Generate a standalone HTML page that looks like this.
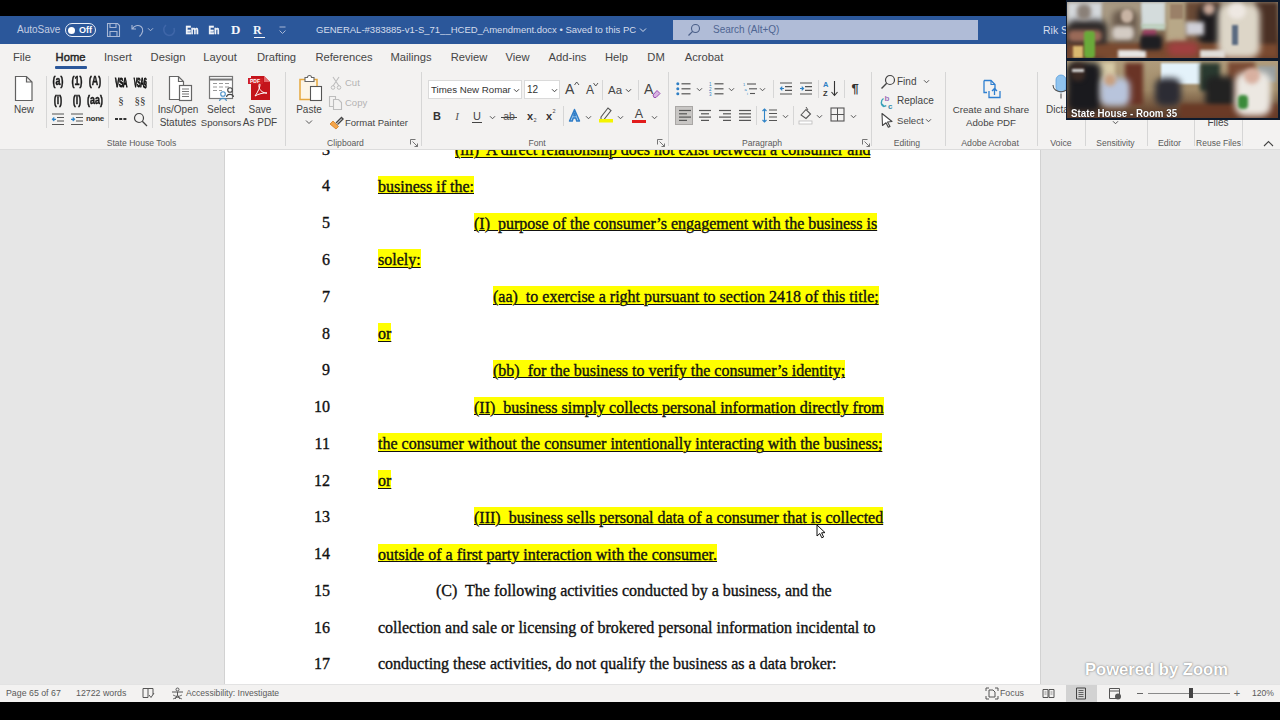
<!DOCTYPE html>
<html><head><meta charset="utf-8">
<style>
*{margin:0;padding:0;box-sizing:border-box}
html,body{width:1280px;height:720px;overflow:hidden;background:#000;font-family:"Liberation Sans",sans-serif;position:relative}
.a{position:absolute}
svg.a{overflow:visible}
.t{position:absolute;white-space:nowrap;color:#444;font-size:12px}
.ln{position:absolute;font-family:"Liberation Serif",serif;font-size:16px;color:#111;white-space:nowrap;line-height:20px;-webkit-text-stroke:0.35px #111}
.hl{background:#ffff00;text-decoration:underline;text-decoration-thickness:1px;text-underline-offset:1.5px;padding-top:1.5px}
</style></head><body>
<div class="a" style="left:0px;top:16px;width:1280px;height:28px;background:#2b579a"></div>
<div class="t" style="left:17px;top:20.0px;line-height:20px;font-size:10px;color:#c3cde2;font-weight:normal;">AutoSave</div>
<div class="a" style="left:65px;top:23px;width:31px;height:14px;border:1.2px solid #e8eef8;border-radius:7px"></div>
<div class="a" style="left:68px;top:26.5px;width:7px;height:7px;background:#fff;border-radius:50%"></div>
<div class="t" style="left:79px;top:20.0px;line-height:20px;font-size:9px;color:#fff;font-weight:bold;">Off</div>
<svg class="a" style="left:106px;top:22px;" width="15" height="16" viewBox="0 0 15 16"><path d="M1.5 1.5h10l2 2v11h-12z M4 1.5v4h6v-4 M4 14.5v-5h7v5" fill="none" stroke="#a9b8d6" stroke-width="1.1"/></svg>
<svg class="a" style="left:129px;top:22px;" width="16" height="16" viewBox="0 0 16 16"><path d="M3 3v4h4 M3.5 7 C5 3.5 9 2.5 12 4.5 C15 7 14 11 10.5 14.5" fill="none" stroke="#a9b8d6" stroke-width="1.1"/></svg>
<svg class="a" style="left:146.5px;top:26.5px;" width="7.0" height="5.0" viewBox="0 0 7.0 5.0"><path d="M1 1.25 L3.5 3.75 L6.0 1.25" fill="none" stroke="#a9b8d6" stroke-width="1"/></svg>
<svg class="a" style="left:161px;top:22px;" width="16" height="16" viewBox="0 0 16 16"><path d="M5 3 C1.5 6 2 12 8 13.5 C12 13.5 14.5 10 13 6" fill="none" stroke="#3f66a8" stroke-width="1.6"/></svg>
<div class="t" style="left:41.5px;width:300px;text-align:center;top:21.3px;line-height:20px;font-size:10px;color:#f4f6fa;font-weight:bold;transform:scaleX(0.85);-webkit-text-stroke:0.4px #f4f6fa">Em</div>
<div class="t" style="left:64px;width:300px;text-align:center;top:21.3px;line-height:20px;font-size:10px;color:#f4f6fa;font-weight:bold;transform:scaleX(0.85);-webkit-text-stroke:0.4px #f4f6fa">En</div>
<div class="t" style="left:231px;top:20.0px;line-height:20px;font-size:13px;color:#f4f6fa;font-weight:bold;font-family:'Liberation Serif',serif;">D</div>
<div class="t" style="left:253px;top:20.0px;line-height:20px;font-size:12px;color:#f4f6fa;font-weight:bold;font-family:'Liberation Serif',serif;">R</div>
<div class="a" style="left:254px;top:37px;width:11px;height:1px;background:#f4f6fa"></div>
<svg class="a" style="left:278px;top:24px;" width="9" height="12" viewBox="0 0 9 12"><path d="M1.5 3h6 M1.5 6.5 L4.5 9.5 L7.5 6.5" fill="none" stroke="#a9b8d6" stroke-width="1"/></svg>
<div class="t" style="left:316px;top:20.0px;line-height:20px;font-size:9.5px;color:#d5ddec;font-weight:normal;">GENERAL-#383885-v1-S_71__HCED_Amendment.docx • Saved to this PC</div>
<svg class="a" style="left:639px;top:27px;" width="8" height="6" viewBox="0 0 8 6"><path d="M1 1.5 L4 4.5 L7 1.5" fill="none" stroke="#d5ddec" stroke-width="1"/></svg>
<div class="a" style="left:673px;top:20px;width:305px;height:20px;background:#b0bcd7"></div>
<svg class="a" style="left:687px;top:23px;" width="14" height="14" viewBox="0 0 14 14"><circle cx="8.5" cy="5.5" r="4" fill="none" stroke="#4b5f88" stroke-width="1.1"/><path d="M5.6 8.4 L1.5 12.5" stroke="#4b5f88" stroke-width="1.2"/></svg>
<div class="t" style="left:713px;top:20.0px;line-height:20px;font-size:10px;color:#4f6592;font-weight:normal;">Search (Alt+Q)</div>
<div class="t" style="left:1043px;top:20.0px;line-height:20px;font-size:10.5px;color:#d5ddec;font-weight:normal;">Rik S</div>
<div class="a" style="left:0px;top:44px;width:1280px;height:106px;background:#f3f2f1"></div>
<div class="t" style="left:-128.0px;width:300px;text-align:center;top:47.0px;line-height:20px;font-size:11.2px;color:#464646;font-weight:normal;">File</div>
<div class="t" style="left:-79.5px;width:300px;text-align:center;top:47.0px;line-height:20px;font-size:11.2px;color:#252525;font-weight:normal;-webkit-text-stroke:0.45px #252525">Home</div>
<div class="t" style="left:-32.0px;width:300px;text-align:center;top:47.0px;line-height:20px;font-size:11.2px;color:#464646;font-weight:normal;">Insert</div>
<div class="t" style="left:18.0px;width:300px;text-align:center;top:47.0px;line-height:20px;font-size:11.2px;color:#464646;font-weight:normal;">Design</div>
<div class="t" style="left:70.0px;width:300px;text-align:center;top:47.0px;line-height:20px;font-size:11.2px;color:#464646;font-weight:normal;">Layout</div>
<div class="t" style="left:126.5px;width:300px;text-align:center;top:47.0px;line-height:20px;font-size:11.2px;color:#464646;font-weight:normal;">Drafting</div>
<div class="t" style="left:194.0px;width:300px;text-align:center;top:47.0px;line-height:20px;font-size:11.2px;color:#464646;font-weight:normal;">References</div>
<div class="t" style="left:261.0px;width:300px;text-align:center;top:47.0px;line-height:20px;font-size:11.2px;color:#464646;font-weight:normal;">Mailings</div>
<div class="t" style="left:319.0px;width:300px;text-align:center;top:47.0px;line-height:20px;font-size:11.2px;color:#464646;font-weight:normal;">Review</div>
<div class="t" style="left:367.5px;width:300px;text-align:center;top:47.0px;line-height:20px;font-size:11.2px;color:#464646;font-weight:normal;">View</div>
<div class="t" style="left:417.5px;width:300px;text-align:center;top:47.0px;line-height:20px;font-size:11.2px;color:#464646;font-weight:normal;">Add-ins</div>
<div class="t" style="left:466.5px;width:300px;text-align:center;top:47.0px;line-height:20px;font-size:11.2px;color:#464646;font-weight:normal;">Help</div>
<div class="t" style="left:506.0px;width:300px;text-align:center;top:47.0px;line-height:20px;font-size:11.2px;color:#464646;font-weight:normal;">DM</div>
<div class="t" style="left:554.0px;width:300px;text-align:center;top:47.0px;line-height:20px;font-size:11.2px;color:#464646;font-weight:normal;">Acrobat</div>
<div class="a" style="left:55px;top:66px;width:32px;height:2.5px;background:#2b579a;border-radius:1px"></div>
<svg class="a" style="left:14px;top:75px;" width="20" height="27" viewBox="0 0 20 27"><path d="M1.5 1.5h11l5.5 5.5v18.5h-16.5z M12.5 1.5v5.5h5.5" fill="#fff" stroke="#616161" stroke-width="1.2"/></svg>
<div class="t" style="left:-126px;width:300px;text-align:center;top:100.0px;line-height:20px;font-size:10px;color:#444;font-weight:normal;">New</div>
<div class="a" style="left:46px;top:76px;width:1px;height:52px;background:#d6d6d6"></div>
<div class="t" style="left:-92px;width:300px;text-align:center;top:70.8px;line-height:20px;font-size:13.5px;color:#1a1a1a;font-weight:bold;transform:scaleX(0.66);-webkit-text-stroke:0.5px #1a1a1a">(a)</div>
<div class="t" style="left:-73.5px;width:300px;text-align:center;top:70.8px;line-height:20px;font-size:13.5px;color:#1a1a1a;font-weight:bold;transform:scaleX(0.66);-webkit-text-stroke:0.5px #1a1a1a">(1)</div>
<div class="t" style="left:-55px;width:300px;text-align:center;top:70.8px;line-height:20px;font-size:13.5px;color:#1a1a1a;font-weight:bold;transform:scaleX(0.66);-webkit-text-stroke:0.5px #1a1a1a">(A)</div>
<div class="t" style="left:-92px;width:300px;text-align:center;top:90.0px;line-height:20px;font-size:13.5px;color:#1a1a1a;font-weight:bold;transform:scaleX(0.66);-webkit-text-stroke:0.5px #1a1a1a">(i)</div>
<div class="t" style="left:-73.5px;width:300px;text-align:center;top:90.0px;line-height:20px;font-size:13.5px;color:#1a1a1a;font-weight:bold;transform:scaleX(0.66);-webkit-text-stroke:0.5px #1a1a1a">(I)</div>
<div class="t" style="left:-55px;width:300px;text-align:center;top:90.0px;line-height:20px;font-size:13.5px;color:#1a1a1a;font-weight:bold;transform:scaleX(0.66);-webkit-text-stroke:0.5px #1a1a1a">(aa)</div>
<svg class="a" style="left:51px;top:113px;" width="14" height="13" viewBox="0 0 14 13"><path d="M1 1h12 M6 4.5h7 M6 8h7 M1 11.5h12" stroke="#555" stroke-width="1.2"/><path d="M5 6.3 H1.5 M3.3 4.5 L1.5 6.3 L3.3 8" fill="none" stroke="#2f83c7" stroke-width="1.2"/></svg>
<svg class="a" style="left:70px;top:113px;" width="14" height="13" viewBox="0 0 14 13"><path d="M1 1h12 M6 4.5h7 M6 8h7 M1 11.5h12" stroke="#555" stroke-width="1.2"/><path d="M1 6.3 H4.5 M2.7 4.5 L4.5 6.3 L2.7 8" fill="none" stroke="#2f83c7" stroke-width="1.2"/></svg>
<div class="t" style="left:-55px;width:300px;text-align:center;top:109.0px;line-height:20px;font-size:8px;color:#333;font-weight:bold;letter-spacing:-0.3px">none</div>
<div class="a" style="left:108px;top:76px;width:1px;height:52px;background:#d6d6d6"></div>
<div class="t" style="left:-29px;width:300px;text-align:center;top:72.5px;line-height:20px;font-size:13px;color:#111;font-weight:bold;transform:scaleX(0.5);letter-spacing:-1px;-webkit-text-stroke:0.9px #111">VSA</div>
<div class="t" style="left:-10px;width:300px;text-align:center;top:72.5px;line-height:20px;font-size:13px;color:#111;font-weight:bold;transform:scaleX(0.42);letter-spacing:-1px;-webkit-text-stroke:0.9px #111">VSA§</div>
<div class="t" style="left:-29px;width:300px;text-align:center;top:90.0px;line-height:20px;font-size:11px;color:#333;font-weight:normal;font-family:'Liberation Serif',serif;">§</div>
<div class="t" style="left:-10px;width:300px;text-align:center;top:90.0px;line-height:20px;font-size:11px;color:#333;font-weight:normal;font-family:'Liberation Serif',serif;">§§</div>
<svg class="a" style="left:114px;top:117px;" width="14" height="4" viewBox="0 0 14 4"><path d="M1 2h12" stroke="#333" stroke-width="2.2" stroke-dasharray="3 1.2"/></svg>
<svg class="a" style="left:133px;top:112px;" width="15" height="15" viewBox="0 0 15 15"><circle cx="6" cy="6" r="4.5" fill="none" stroke="#444" stroke-width="1.2"/><path d="M9.3 9.3 L14 14" stroke="#444" stroke-width="1.3"/></svg>
<div class="a" style="left:152px;top:76px;width:1px;height:52px;background:#d6d6d6"></div>
<svg class="a" style="left:168px;top:75px;" width="25" height="27" viewBox="0 0 25 27"><path d="M1.5 1.5h9l5 5v18h-14z M10.5 1.5v5h5" fill="#fff" stroke="#666" stroke-width="1.2"/><rect x="11.5" y="10.5" width="12" height="15" fill="#fff" stroke="#666" stroke-width="1.2"/><path d="M14 14h7 M14 16.5h7 M14 19h7 M14 21.5h7" stroke="#777" stroke-width="1"/></svg>
<div class="t" style="left:28px;width:300px;text-align:center;top:99.5px;line-height:20px;font-size:10px;color:#444;font-weight:normal;">Ins/Open</div>
<div class="t" style="left:28px;width:300px;text-align:center;top:113.0px;line-height:20px;font-size:10px;color:#444;font-weight:normal;">Statutes</div>
<svg class="a" style="left:208px;top:75px;" width="28" height="27" viewBox="0 0 28 27"><rect x="1.5" y="1.5" width="23" height="22" fill="#fff" stroke="#777" stroke-width="1.2"/><path d="M1.5 4.5h23" stroke="#777" stroke-width="2"/><path d="M5 8.5h4 M11 8.5h4 M17 8.5h4 M5 12h4 M11 12h4 M17 12h4 M5 15.5h4 M11 15.5h3" stroke="#999" stroke-width="1.1"/><circle cx="15" cy="19" r="2.3" fill="#fff" stroke="#4a90c8" stroke-width="1.1"/><path d="M11.5 26 C12 22.5 18 22.5 18.5 26" fill="none" stroke="#4a90c8" stroke-width="1.1"/><circle cx="22" cy="15" r="2.3" fill="#fff" stroke="#444" stroke-width="1.1"/><path d="M18.5 22 C19 18.5 25 18.5 25.5 22" fill="none" stroke="#444" stroke-width="1.1"/></svg>
<div class="t" style="left:71px;width:300px;text-align:center;top:99.5px;line-height:20px;font-size:10px;color:#444;font-weight:normal;">Select</div>
<div class="t" style="left:71px;width:300px;text-align:center;top:113.0px;line-height:20px;font-size:9.6px;color:#444;font-weight:normal;">Sponsors</div>
<svg class="a" style="left:247px;top:74px;" width="27" height="28" viewBox="0 0 27 28"><path d="M4 2h13l6 6v18h-19z" fill="#c4141b"/><path d="M17 2v6h6" fill="#e46a6e"/><rect x="1" y="4" width="15" height="6" fill="#d01f26"/><text x="3" y="9.2" font-size="5" font-weight="bold" fill="#fff" font-family="Liberation Sans">PDF</text><path d="M8 22 C11 18 13 13 13 11 C13 9 11.5 10 12 13 C13 17 16 19 20 19 C17 18.5 11 20 8 22z" fill="none" stroke="#fff" stroke-width="1"/></svg>
<div class="t" style="left:110px;width:300px;text-align:center;top:99.5px;line-height:20px;font-size:10px;color:#444;font-weight:normal;">Save</div>
<div class="t" style="left:110px;width:300px;text-align:center;top:113.0px;line-height:20px;font-size:10px;color:#444;font-weight:normal;">As PDF</div>
<div class="t" style="left:-8.5px;width:300px;text-align:center;top:133.0px;line-height:20px;font-size:8.6px;color:#5b5b5b;font-weight:normal;">State House Tools</div>
<div class="a" style="left:285px;top:72px;width:1px;height:74px;background:#d6d6d6"></div>
<svg class="a" style="left:297px;top:74px;" width="29" height="29" viewBox="0 0 29 29"><path d="M3 5.5h17v20h-17z" fill="#fcf5e6" stroke="#e6a83c" stroke-width="1.5"/><path d="M8 3.5h2.5a2 2 0 0 1 4 0h2.5v4h-9z" fill="#fff" stroke="#666" stroke-width="1.1"/><rect x="13.5" y="12.5" width="11" height="14" fill="#fff" stroke="#555" stroke-width="1.1"/></svg>
<div class="t" style="left:159px;width:300px;text-align:center;top:100.0px;line-height:20px;font-size:10px;color:#444;font-weight:normal;">Paste</div>
<svg class="a" style="left:305px;top:119px;" width="8" height="6" viewBox="0 0 8 6"><path d="M1 1.5 L4 4.5 L7 1.5" fill="none" stroke="#555" stroke-width="1"/></svg>
<svg class="a" style="left:330px;top:76px;" width="12" height="14" viewBox="0 0 12 14"><path d="M3 1 L9 10 M9 1 L3 10" stroke="#bdbdbd" stroke-width="1.1"/><circle cx="3" cy="11.5" r="1.8" fill="none" stroke="#bdbdbd"/><circle cx="9" cy="11.5" r="1.8" fill="none" stroke="#bdbdbd"/></svg>
<div class="t" style="left:345px;top:73.0px;line-height:20px;font-size:9.5px;color:#b3b3b3;font-weight:normal;">Cut</div>
<svg class="a" style="left:328px;top:95px;" width="15" height="15" viewBox="0 0 15 15"><path d="M1.5 1.5h6v10h-6z" fill="none" stroke="#bdbdbd" stroke-width="1.1"/><path d="M5.5 4.5h5l3 3v7h-8z" fill="#f3f2f1" stroke="#bdbdbd" stroke-width="1.1"/></svg>
<div class="t" style="left:345px;top:93.0px;line-height:20px;font-size:9.5px;color:#b3b3b3;font-weight:normal;">Copy</div>
<svg class="a" style="left:328px;top:115px;" width="16" height="15" viewBox="0 0 16 15"><path d="M2 9 L8 14 L10.5 11.5 L5 6z" fill="#f4a54a" stroke="#d27d1f" stroke-width="0.8"/><path d="M8 8 L13.5 2.5 L15 4 L9.5 9.5" fill="none" stroke="#444" stroke-width="1.4"/></svg>
<div class="t" style="left:345px;top:113.0px;line-height:20px;font-size:9.5px;color:#444;font-weight:normal;">Format Painter</div>
<div class="t" style="left:195.5px;width:300px;text-align:center;top:133.0px;line-height:20px;font-size:8.6px;color:#5b5b5b;font-weight:normal;">Clipboard</div>
<svg class="a" style="left:410px;top:139px;" width="9" height="8" viewBox="0 0 9 8"><path d="M0.5 0.5h5 M0.5 0.5v5 M2.5 2.5 L7.5 7.5 M4.5 7.5h3v-3" fill="none" stroke="#666" stroke-width="0.9"/></svg>
<div class="a" style="left:421px;top:72px;width:1px;height:74px;background:#d6d6d6"></div>
<div class="a" style="left:428px;top:80px;width:94px;height:19px;background:#fff;border:1px solid #dadada"></div>
<div class="t" style="left:431px;top:79.5px;line-height:20px;font-size:9.7px;color:#333;font-weight:normal;">Times New Romar</div>
<svg class="a" style="left:512.5px;top:87.5px;" width="7.0" height="5.0" viewBox="0 0 7.0 5.0"><path d="M1 1.25 L3.5 3.75 L6.0 1.25" fill="none" stroke="#444" stroke-width="1"/></svg>
<div class="a" style="left:524px;top:80px;width:36px;height:19px;background:#fff;border:1px solid #dadada"></div>
<div class="t" style="left:527px;top:79.5px;line-height:20px;font-size:10px;color:#333;font-weight:normal;">12</div>
<svg class="a" style="left:550.5px;top:87.5px;" width="7.0" height="5.0" viewBox="0 0 7.0 5.0"><path d="M1 1.25 L3.5 3.75 L6.0 1.25" fill="none" stroke="#444" stroke-width="1"/></svg>
<div class="t" style="left:565px;top:79.0px;line-height:20px;font-size:14px;color:#444;font-weight:normal;">A</div>
<svg class="a" style="left:574px;top:81px;" width="6" height="5" viewBox="0 0 6 5"><path d="M0.5 4 L2.7 1 L5 4" fill="none" stroke="#444" stroke-width="0.9"/></svg>
<div class="t" style="left:586px;top:80.0px;line-height:20px;font-size:12px;color:#444;font-weight:normal;">A</div>
<svg class="a" style="left:593px;top:82px;" width="6" height="5" viewBox="0 0 6 5"><path d="M0.5 1 L2.7 4 L5 1" fill="none" stroke="#444" stroke-width="0.9"/></svg>
<div class="a" style="left:601.5px;top:80px;width:1px;height:20px;background:#d6d6d6"></div>
<div class="t" style="left:608px;top:80.0px;line-height:20px;font-size:11.5px;color:#444;font-weight:normal;">Aa</div>
<svg class="a" style="left:624.5px;top:87.5px;" width="7.0" height="5.0" viewBox="0 0 7.0 5.0"><path d="M1 1.25 L3.5 3.75 L6.0 1.25" fill="none" stroke="#444" stroke-width="1"/></svg>
<div class="a" style="left:637.5px;top:80px;width:1px;height:20px;background:#d6d6d6"></div>
<div class="t" style="left:644px;top:79.0px;line-height:20px;font-size:14px;color:#444;font-weight:normal;">A</div>
<svg class="a" style="left:651px;top:89px;" width="10" height="9" viewBox="0 0 10 9"><path d="M2 6 L6 1.5 L9 4.5 L5 8.5 H3z" fill="#d8b4e2" stroke="#9b4fb4" stroke-width="1"/></svg>
<div class="t" style="left:287px;width:300px;text-align:center;top:106.0px;line-height:20px;font-size:11px;color:#333;font-weight:bold;">B</div>
<div class="t" style="left:307px;width:300px;text-align:center;top:106.0px;line-height:20px;font-size:11px;color:#555;font-weight:normal;font-family:'Liberation Serif',serif;font-style:italic">I</div>
<div class="t" style="left:327px;width:300px;text-align:center;top:105.5px;line-height:20px;font-size:11px;color:#444;font-weight:normal;">U</div>
<div class="a" style="left:472px;top:122px;width:10px;height:1px;background:#444"></div>
<svg class="a" style="left:488.5px;top:114.5px;" width="7.0" height="5.0" viewBox="0 0 7.0 5.0"><path d="M1 1.25 L3.5 3.75 L6.0 1.25" fill="none" stroke="#555" stroke-width="1"/></svg>
<div class="t" style="left:359px;width:300px;text-align:center;top:106.0px;line-height:20px;font-size:10.5px;color:#555;font-weight:normal;">ab</div>
<div class="a" style="left:501px;top:116.5px;width:16px;height:1px;background:#444"></div>
<div class="t" style="left:380px;width:300px;text-align:center;top:106.0px;line-height:20px;font-size:11px;color:#333;font-weight:bold;">x</div>
<div class="t" style="left:385px;width:300px;text-align:center;top:110.0px;line-height:20px;font-size:5.5px;color:#444;font-weight:normal;">2</div>
<div class="t" style="left:399px;width:300px;text-align:center;top:106.0px;line-height:20px;font-size:11px;color:#333;font-weight:bold;">x</div>
<div class="t" style="left:404px;width:300px;text-align:center;top:101.0px;line-height:20px;font-size:5.5px;color:#444;font-weight:normal;">2</div>
<div class="a" style="left:562.5px;top:106px;width:1px;height:20px;background:#d6d6d6"></div>
<svg class="a" style="left:568px;top:108px;" width="13" height="14" viewBox="0 0 13 14"><path d="M6.5 1.5 L1.5 13 H4.3 L5.2 10 H7.8 L8.7 13 H11.5 Z M5.8 7.8 L6.5 5 L7.3 7.8z" fill="#9cc8ee" stroke="#2e7cc6" stroke-width="1.4" stroke-linejoin="round"/></svg>
<svg class="a" style="left:584.5px;top:114.5px;" width="7.0" height="5.0" viewBox="0 0 7.0 5.0"><path d="M1 1.25 L3.5 3.75 L6.0 1.25" fill="none" stroke="#555" stroke-width="1"/></svg>
<svg class="a" style="left:597px;top:105px;" width="18" height="19" viewBox="0 0 18 19"><path d="M4 12 L11 3 L14 5.5 L7 14.5 H4z" fill="none" stroke="#555" stroke-width="1.1"/><rect x="2" y="14" width="14" height="3.5" fill="#f4f400"/></svg>
<svg class="a" style="left:616.5px;top:114.5px;" width="7.0" height="5.0" viewBox="0 0 7.0 5.0"><path d="M1 1.25 L3.5 3.75 L6.0 1.25" fill="none" stroke="#555" stroke-width="1"/></svg>
<div class="t" style="left:489px;width:300px;text-align:center;top:104.0px;line-height:20px;font-size:12.5px;color:#444;font-weight:normal;">A</div>
<div class="a" style="left:632px;top:119.5px;width:14px;height:3px;background:#e21c1c"></div>
<svg class="a" style="left:650.5px;top:114.5px;" width="7.0" height="5.0" viewBox="0 0 7.0 5.0"><path d="M1 1.25 L3.5 3.75 L6.0 1.25" fill="none" stroke="#555" stroke-width="1"/></svg>
<div class="t" style="left:387px;width:300px;text-align:center;top:133.0px;line-height:20px;font-size:8.6px;color:#5b5b5b;font-weight:normal;">Font</div>
<svg class="a" style="left:657px;top:139px;" width="9" height="8" viewBox="0 0 9 8"><path d="M0.5 0.5h5 M0.5 0.5v5 M2.5 2.5 L7.5 7.5 M4.5 7.5h3v-3" fill="none" stroke="#666" stroke-width="0.9"/></svg>
<div class="a" style="left:668px;top:72px;width:1px;height:74px;background:#d6d6d6"></div>
<svg class="a" style="left:676px;top:82px;" width="15" height="13" viewBox="0 0 15 13"><circle cx="1.8" cy="1.8" r="1.5" fill="#2f7fc4"/><path d="M5.5 1.8h9" stroke="#555" stroke-width="1.2"/><circle cx="1.8" cy="6.8" r="1.5" fill="#2f7fc4"/><path d="M5.5 6.8h9" stroke="#555" stroke-width="1.2"/><circle cx="1.8" cy="11.8" r="1.5" fill="#2f7fc4"/><path d="M5.5 11.8h9" stroke="#555" stroke-width="1.2"/></svg>
<svg class="a" style="left:695.5px;top:86.5px;" width="7.0" height="5.0" viewBox="0 0 7.0 5.0"><path d="M1 1.25 L3.5 3.75 L6.0 1.25" fill="none" stroke="#555" stroke-width="1"/></svg>
<svg class="a" style="left:709px;top:82px;" width="15" height="13" viewBox="0 0 15 13"><text x="0" y="3.8" font-size="4.5" fill="#2f7fc4" font-family="Liberation Sans">1</text><path d="M5.5 1.8h9" stroke="#555" stroke-width="1.2"/><text x="0" y="8.8" font-size="4.5" fill="#2f7fc4" font-family="Liberation Sans">2</text><path d="M5.5 6.8h9" stroke="#555" stroke-width="1.2"/><text x="0" y="13.8" font-size="4.5" fill="#2f7fc4" font-family="Liberation Sans">3</text><path d="M5.5 11.8h9" stroke="#555" stroke-width="1.2"/></svg>
<svg class="a" style="left:727.5px;top:86.5px;" width="7.0" height="5.0" viewBox="0 0 7.0 5.0"><path d="M1 1.25 L3.5 3.75 L6.0 1.25" fill="none" stroke="#555" stroke-width="1"/></svg>
<svg class="a" style="left:743px;top:82px;" width="15" height="13" viewBox="0 0 15 13"><text x="0" y="4" font-size="4" fill="#2f7fc4" font-family="Liberation Sans">1</text><path d="M4 2h9" stroke="#555" stroke-width="1.1"/><text x="1.5" y="8.5" font-size="4" fill="#2f7fc4" font-family="Liberation Sans">a</text><path d="M6 6.8h8" stroke="#555" stroke-width="1.1"/><text x="4" y="13" font-size="4" fill="#2f7fc4" font-family="Liberation Sans">i</text><path d="M7 11.5h5" stroke="#555" stroke-width="1.1"/></svg>
<svg class="a" style="left:758.5px;top:86.5px;" width="7.0" height="5.0" viewBox="0 0 7.0 5.0"><path d="M1 1.25 L3.5 3.75 L6.0 1.25" fill="none" stroke="#555" stroke-width="1"/></svg>
<div class="a" style="left:773px;top:80px;width:1px;height:18px;background:#d6d6d6"></div>
<svg class="a" style="left:779px;top:82px;" width="14" height="13" viewBox="0 0 14 13"><path d="M1 1h12 M6 4.7h7 M6 8.3h7 M1 12h12" stroke="#555" stroke-width="1.2"/><path d="M5 6.5 H1.5 M3.3 4.7 L1.5 6.5 L3.3 8.3" fill="none" stroke="#2f83c7" stroke-width="1.2"/></svg>
<svg class="a" style="left:799px;top:82px;" width="14" height="13" viewBox="0 0 14 13"><path d="M1 1h12 M6 4.7h7 M6 8.3h7 M1 12h12" stroke="#555" stroke-width="1.2"/><path d="M1 6.5 H4.5 M2.7 4.7 L4.5 6.5 L2.7 8.3" fill="none" stroke="#2f83c7" stroke-width="1.2"/></svg>
<div class="a" style="left:818px;top:80px;width:1px;height:18px;background:#d6d6d6"></div>
<svg class="a" style="left:823px;top:80px;" width="16" height="17" viewBox="0 0 16 17"><text x="0" y="7" font-size="7.5" fill="#2f7fc4" font-family="Liberation Sans" font-weight="bold">A</text><text x="0" y="15.5" font-size="7.5" fill="#333" font-family="Liberation Sans" font-weight="bold">Z</text><path d="M11.5 1v14 M8.5 12 L11.5 15.5 L14.5 12" fill="none" stroke="#333" stroke-width="1.1"/></svg>
<div class="a" style="left:844px;top:80px;width:1px;height:18px;background:#d6d6d6"></div>
<div class="t" style="left:705px;width:300px;text-align:center;top:78.5px;line-height:20px;font-size:13px;color:#333;font-weight:bold;">¶</div>
<div class="a" style="left:675px;top:106px;width:18px;height:19px;background:#c8c6c4;border:1px solid #a9a7a5"></div>
<svg class="a" style="left:677.5px;top:109px;" width="14" height="13" viewBox="0 0 14 13"><path d="M1 1.5h12" stroke="#555" stroke-width="1.2"/><path d="M1 4.8h8" stroke="#555" stroke-width="1.2"/><path d="M1 8.1h12" stroke="#555" stroke-width="1.2"/><path d="M1 11.399999999999999h8" stroke="#555" stroke-width="1.2"/></svg>
<svg class="a" style="left:697.5px;top:109px;" width="14" height="13" viewBox="0 0 14 13"><path d="M1 1.5h12" stroke="#555" stroke-width="1.2"/><path d="M3 4.8h8" stroke="#555" stroke-width="1.2"/><path d="M1 8.1h12" stroke="#555" stroke-width="1.2"/><path d="M3 11.399999999999999h8" stroke="#555" stroke-width="1.2"/></svg>
<svg class="a" style="left:717.5px;top:109px;" width="14" height="13" viewBox="0 0 14 13"><path d="M1 1.5h12" stroke="#555" stroke-width="1.2"/><path d="M5 4.8h8" stroke="#555" stroke-width="1.2"/><path d="M1 8.1h12" stroke="#555" stroke-width="1.2"/><path d="M5 11.399999999999999h8" stroke="#555" stroke-width="1.2"/></svg>
<svg class="a" style="left:737.5px;top:109px;" width="14" height="13" viewBox="0 0 14 13"><path d="M1 1.5h12" stroke="#555" stroke-width="1.2"/><path d="M1 4.8h12" stroke="#555" stroke-width="1.2"/><path d="M1 8.1h12" stroke="#555" stroke-width="1.2"/><path d="M1 11.399999999999999h12" stroke="#555" stroke-width="1.2"/></svg>
<div class="a" style="left:756px;top:106px;width:1px;height:19px;background:#d6d6d6"></div>
<svg class="a" style="left:762px;top:108px;" width="16" height="15" viewBox="0 0 16 15"><path d="M2.5 1 V14 M0.5 3 L2.5 1 L4.5 3 M0.5 12 L2.5 14 L4.5 12" fill="none" stroke="#2f83c7" stroke-width="1.1"/><path d="M7 2h8 M7 5.5h8 M7 9h8 M7 12.5h8" stroke="#555" stroke-width="1.2"/></svg>
<svg class="a" style="left:781.5px;top:113.5px;" width="7.0" height="5.0" viewBox="0 0 7.0 5.0"><path d="M1 1.25 L3.5 3.75 L6.0 1.25" fill="none" stroke="#555" stroke-width="1"/></svg>
<div class="a" style="left:793px;top:106px;width:1px;height:19px;background:#d6d6d6"></div>
<svg class="a" style="left:798px;top:106px;" width="16" height="19" viewBox="0 0 16 19"><path d="M3 9 L8 3.5 L12.5 8 L8 12.5z" fill="none" stroke="#555" stroke-width="1.1"/><path d="M8 1 L10 4" stroke="#555"/><rect x="1" y="15" width="13" height="3" fill="#fff" stroke="#bbb" stroke-width="0.8"/></svg>
<svg class="a" style="left:815.5px;top:113.5px;" width="7.0" height="5.0" viewBox="0 0 7.0 5.0"><path d="M1 1.25 L3.5 3.75 L6.0 1.25" fill="none" stroke="#555" stroke-width="1"/></svg>
<svg class="a" style="left:830px;top:107px;" width="15" height="15" viewBox="0 0 15 15"><rect x="1" y="1" width="13" height="13" fill="none" stroke="#555" stroke-width="1.1"/><path d="M7.5 1v13 M1 7.5h13" stroke="#555" stroke-width="1"/></svg>
<svg class="a" style="left:849.5px;top:113.5px;" width="7.0" height="5.0" viewBox="0 0 7.0 5.0"><path d="M1 1.25 L3.5 3.75 L6.0 1.25" fill="none" stroke="#555" stroke-width="1"/></svg>
<div class="t" style="left:612px;width:300px;text-align:center;top:133.0px;line-height:20px;font-size:8.6px;color:#5b5b5b;font-weight:normal;">Paragraph</div>
<svg class="a" style="left:862px;top:139px;" width="9" height="8" viewBox="0 0 9 8"><path d="M0.5 0.5h5 M0.5 0.5v5 M2.5 2.5 L7.5 7.5 M4.5 7.5h3v-3" fill="none" stroke="#666" stroke-width="0.9"/></svg>
<div class="a" style="left:871px;top:72px;width:1px;height:74px;background:#d6d6d6"></div>
<svg class="a" style="left:880px;top:74px;" width="16" height="16" viewBox="0 0 16 16"><circle cx="10" cy="6" r="4.5" fill="none" stroke="#444" stroke-width="1.2"/><path d="M6.7 9.3 L1.5 14.5" stroke="#444" stroke-width="1.4"/></svg>
<div class="t" style="left:897px;top:71.5px;line-height:20px;font-size:10px;color:#444;font-weight:normal;">Find</div>
<svg class="a" style="left:922.5px;top:79.0px;" width="7.0" height="5.0" viewBox="0 0 7.0 5.0"><path d="M1 1.25 L3.5 3.75 L6.0 1.25" fill="none" stroke="#555" stroke-width="1"/></svg>
<svg class="a" style="left:879px;top:93px;" width="17" height="17" viewBox="0 0 17 17"><text x="5.5" y="7.5" font-size="8" font-weight="bold" fill="#a070b8" font-family="Liberation Sans">b</text><text x="9" y="15.5" font-size="8" font-weight="bold" fill="#3a8aa8" font-family="Liberation Sans">c</text><path d="M4.5 5.5 C1.5 7.5 1.5 12 5 13.5 M3.2 11.3 L5 13.5 L7.3 12.6" fill="none" stroke="#3aa0b8" stroke-width="1.4"/></svg>
<div class="t" style="left:897px;top:91.0px;line-height:20px;font-size:10px;color:#444;font-weight:normal;">Replace</div>
<svg class="a" style="left:880px;top:112px;" width="14" height="16" viewBox="0 0 14 16"><path d="M2 1.5 L12 9.5 L7.5 10 L10 14.5 L8.3 15.3 L6 10.8 L2.5 13.5z" fill="#fff" stroke="#444" stroke-width="1.1" stroke-linejoin="round"/></svg>
<div class="t" style="left:897px;top:110.5px;line-height:20px;font-size:9.6px;color:#484848;font-weight:normal;">Select</div>
<svg class="a" style="left:924.5px;top:118.0px;" width="7.0" height="5.0" viewBox="0 0 7.0 5.0"><path d="M1 1.25 L3.5 3.75 L6.0 1.25" fill="none" stroke="#555" stroke-width="1"/></svg>
<div class="t" style="left:757px;width:300px;text-align:center;top:133.0px;line-height:20px;font-size:8.6px;color:#5b5b5b;font-weight:normal;">Editing</div>
<div class="a" style="left:945px;top:72px;width:1px;height:74px;background:#d6d6d6"></div>
<svg class="a" style="left:982px;top:79px;" width="20" height="20" viewBox="0 0 20 20"><path d="M2 1.5h7l4 4v6" fill="none" stroke="#2f7fd0" stroke-width="1.3"/><path d="M2 1.5v12h3" fill="none" stroke="#2f7fd0" stroke-width="1.3"/><path d="M9 1.5v4h4" fill="none" stroke="#2f7fd0" stroke-width="1.1"/><path d="M7 12v6.5h11v-6.5 M12.5 16v-6.5 M10 12 L12.5 9.5 L15 12" fill="none" stroke="#2f7fd0" stroke-width="1.3"/></svg>
<div class="t" style="left:841px;width:300px;text-align:center;top:100.0px;line-height:20px;font-size:9.7px;color:#444;font-weight:normal;">Create and Share</div>
<div class="t" style="left:841px;width:300px;text-align:center;top:113.0px;line-height:20px;font-size:9.7px;color:#444;font-weight:normal;">Adobe PDF</div>
<div class="t" style="left:840px;width:300px;text-align:center;top:133.0px;line-height:20px;font-size:8.8px;color:#5b5b5b;font-weight:normal;">Adobe Acrobat</div>
<div class="a" style="left:1037px;top:72px;width:1px;height:74px;background:#d6d6d6"></div>
<svg class="a" style="left:1051px;top:74px;" width="20" height="26" viewBox="0 0 20 26"><rect x="5" y="1" width="10" height="17" rx="5" fill="#8fc3ee" stroke="#5aa0dc" stroke-width="0.8"/><path d="M2 11 C2 20 18 20 18 11 M10 19.5v5" fill="none" stroke="#555" stroke-width="1.1"/></svg>
<div class="t" style="left:1046px;top:100.0px;line-height:20px;font-size:10px;color:#444;font-weight:normal;">Dicta</div>
<div class="t" style="left:911px;width:300px;text-align:center;top:133.0px;line-height:20px;font-size:8.8px;color:#5b5b5b;font-weight:normal;">Voice</div>
<div class="a" style="left:1085px;top:120px;width:1px;height:26px;background:#d6d6d6"></div>
<svg class="a" style="left:1111.5px;top:119.5px;" width="7.0" height="5.0" viewBox="0 0 7.0 5.0"><path d="M1 1.25 L3.5 3.75 L6.0 1.25" fill="none" stroke="#555" stroke-width="1"/></svg>
<div class="t" style="left:965.5px;width:300px;text-align:center;top:133.0px;line-height:20px;font-size:8.5px;color:#5b5b5b;font-weight:normal;">Sensitivity</div>
<div class="a" style="left:1147px;top:120px;width:1px;height:26px;background:#d6d6d6"></div>
<div class="t" style="left:1019.5px;width:300px;text-align:center;top:133.0px;line-height:20px;font-size:8.8px;color:#5b5b5b;font-weight:normal;">Editor</div>
<div class="a" style="left:1194px;top:120px;width:1px;height:26px;background:#d6d6d6"></div>
<div class="t" style="left:1068px;width:300px;text-align:center;top:113.0px;line-height:20px;font-size:10px;color:#444;font-weight:normal;">Files</div>
<div class="t" style="left:1068.5px;width:300px;text-align:center;top:133.0px;line-height:20px;font-size:8.5px;color:#5b5b5b;font-weight:normal;">Reuse Files</div>
<div class="a" style="left:1242px;top:120px;width:1px;height:26px;background:#d6d6d6"></div>
<svg class="a" style="left:1263px;top:140px;" width="11" height="7" viewBox="0 0 11 7"><path d="M1 6 L5.5 1.5 L10 6" fill="none" stroke="#444" stroke-width="1.1"/></svg>
<div class="a" style="left:0px;top:149px;width:1280px;height:1px;background:#dcdcdc"></div>

<div class="a" style="left:1066px;top:0;width:214px;height:120px;background:#0e1a2c;overflow:hidden">
 <div class="a" style="left:1px;top:2px;width:211px;height:56px;overflow:hidden;background:#8a7a64">
  <div class="a" style="left:0;top:0;width:211px;height:56px;background:linear-gradient(180deg,#9a8c78 0%,#8a7a64 40%,#7a5a40 70%,#7a4e34 100%)"></div>
  <div class="a" style="left:0px;top:0px;width:36px;height:24px;background:#d4d8dc;filter:blur(2px);border-radius:0px"></div>
  <div class="a" style="left:36px;top:0px;width:38px;height:40px;background:#a89a84;filter:blur(2px);border-radius:0px"></div>
  <div class="a" style="left:74px;top:0px;width:25px;height:24px;background:#d4dcdc;filter:blur(1.5px);border-radius:0px"></div>
  <div class="a" style="left:74px;top:22px;width:25px;height:6px;background:#c0d4c4;filter:blur(1.5px);border-radius:0px"></div>
  <div class="a" style="left:99px;top:0px;width:20px;height:40px;background:#b8a888;filter:blur(2px);border-radius:0px"></div>
  <div class="a" style="left:103px;top:2px;width:13px;height:15px;background:#9a8068;filter:blur(1px);border-radius:0px"></div>
  <div class="a" style="left:119px;top:0px;width:34px;height:20px;background:#6a4a36;filter:blur(2px);border-radius:0px"></div>
  <div class="a" style="left:188px;top:0px;width:23px;height:56px;background:#4a3024;filter:blur(2px);border-radius:0px"></div>
  <div class="a" style="left:0px;top:18px;width:40px;height:38px;background:#2e2a2a;filter:blur(3px);border-radius:8px"></div>
  <div class="a" style="left:1px;top:28px;width:34px;height:12px;background:#9a6a58;filter:blur(2px);border-radius:5px"></div>
  <div class="a" style="left:10px;top:2px;width:14px;height:16px;background:#8a8078;filter:blur(2px);border-radius:6px"></div>
  <div class="a" style="left:45px;top:8px;width:26px;height:35px;background:#6a5a4c;filter:blur(3px);border-radius:8px"></div>
  <div class="a" style="left:45px;top:24px;width:22px;height:14px;background:#d4ccc4;filter:blur(2px);border-radius:5px"></div>
  <div class="a" style="left:54px;top:7px;width:12px;height:14px;background:#c8b4a4;filter:blur(1.5px);border-radius:6px"></div>
  <div class="a" style="left:76px;top:28px;width:13px;height:8px;background:#a44468;filter:blur(1.5px);border-radius:0px"></div>
  <div class="a" style="left:131px;top:3px;width:24px;height:40px;background:#1e1c1e;filter:blur(3px);border-radius:8px"></div>
  <div class="a" style="left:136px;top:1px;width:12px;height:12px;background:#c8a898;filter:blur(2px);border-radius:6px"></div>
  <div class="a" style="left:119px;top:20px;width:18px;height:13px;background:#d0d0d8;filter:blur(2px);border-radius:0px"></div>
  <div class="a" style="left:0px;top:42px;width:211px;height:14px;background:#7a4a30;filter:blur(2px);border-radius:0px"></div>
  <div class="a" style="left:6px;top:44px;width:10px;height:12px;background:#d8b870;filter:blur(1px);border-radius:0px"></div>
  <div class="a" style="left:17px;top:29px;width:11px;height:27px;background:#6aaa3a;filter:blur(1px);border-radius:3px"></div>
  <div class="a" style="left:51px;top:48px;width:28px;height:8px;background:#e8e6e4;filter:blur(1.5px);border-radius:0px"></div>
  <div class="a" style="left:73px;top:33px;width:22px;height:15px;background:#1e1e22;filter:blur(2px);border-radius:4px"></div>
  <div class="a" style="left:101px;top:40px;width:30px;height:14px;background:#a04040;filter:blur(3px);border-radius:5px"></div>
  <div class="a" style="left:151px;top:2px;width:42px;height:54px;background:#ddd6c8;filter:blur(3px);border-radius:10px"></div>
  <div class="a" style="left:161px;top:1px;width:18px;height:16px;background:#eee8e2;filter:blur(2px);border-radius:8px"></div>
  <div class="a" style="left:165px;top:23px;width:6px;height:20px;background:#5a6a80;filter:blur(1px);border-radius:0px"></div>
  <div class="a" style="left:133px;top:48px;width:25px;height:8px;background:#e0ddd8;filter:blur(1.5px);border-radius:0px"></div>
 </div>
 <div class="a" style="left:1px;top:61px;width:211px;height:57px;overflow:hidden;background:#a08a68">
  <div class="a" style="left:0;top:0;width:211px;height:57px;background:linear-gradient(180deg,#b09c7c 0%,#a08a68 50%,#6a4a34 85%,#5a3a2a 100%)"></div>
  <div class="a" style="left:21px;top:1px;width:27px;height:22px;background:#d8cca8;filter:blur(2px);border-radius:0px"></div>
  <div class="a" style="left:58px;top:2px;width:18px;height:42px;background:#6a3426;filter:blur(2px);border-radius:0px"></div>
  <div class="a" style="left:94px;top:2px;width:40px;height:21px;background:#e4f2fa;filter:blur(1.2px);border-radius:0px"></div>
  <div class="a" style="left:133px;top:2px;width:20px;height:28px;background:#2a3a30;filter:blur(2px);border-radius:0px"></div>
  <div class="a" style="left:161px;top:1px;width:27px;height:35px;background:#7a4a34;filter:blur(2px);border-radius:0px"></div>
  <div class="a" style="left:191px;top:5px;width:18px;height:16px;background:#9aa0a0;filter:blur(1.5px);border-radius:0px"></div>
  <div class="a" style="left:0px;top:1px;width:34px;height:50px;background:#1a1a1e;filter:blur(3px);border-radius:8px"></div>
  <div class="a" style="left:4px;top:2px;width:14px;height:18px;background:#3a2a24;filter:blur(2px);border-radius:6px"></div>
  <div class="a" style="left:5px;top:8px;width:12px;height:3px;background:#d8d8d8;filter:blur(1px);border-radius:0px"></div>
  <div class="a" style="left:33px;top:17px;width:30px;height:28px;background:#b8c4dc;filter:blur(3px);border-radius:8px"></div>
  <div class="a" style="left:37px;top:13px;width:12px;height:12px;background:#c8a080;filter:blur(2px);border-radius:6px"></div>
  <div class="a" style="left:88px;top:17px;width:26px;height:28px;background:#2c2c34;filter:blur(3px);border-radius:8px"></div>
  <div class="a" style="left:138px;top:15px;width:30px;height:34px;background:#222;filter:blur(3px);border-radius:8px"></div>
  <div class="a" style="left:113px;top:43px;width:98px;height:14px;background:#6a3a26;filter:blur(2px);border-radius:0px"></div>
  <div class="a" style="left:168px;top:11px;width:36px;height:44px;background:#ece8e2;filter:blur(3px);border-radius:10px"></div>
  <div class="a" style="left:177px;top:7px;width:16px;height:16px;background:#d8b0a0;filter:blur(2px);border-radius:8px"></div>
  <div class="a" style="left:171px;top:34px;width:10px;height:14px;background:#3a8a3a;filter:blur(1.5px);border-radius:4px"></div>
 </div>
</div>

<div class="t" style="left:1071px;top:102.5px;line-height:20px;font-size:11.6px;color:#fff;font-weight:bold;transform:scaleX(0.84);transform-origin:0 50%;text-shadow:0 0 1px #000">State House - Room 35</div>
<div class="a" style="left:0;top:150px;width:1280px;height:534px;background:#e6e6e6;overflow:hidden"><div class="a" style="left:225px;top:0;width:815px;height:534px;background:#fff;box-shadow:-1px 0 0 #d2d2d2,1px 0 0 #d2d2d2"><div class="ln" style="top:-10.4px;left:45px;width:60px;text-align:right">3</div>
<div class="ln" style="top:-10.4px;left:230px"><span class="hl">(iii)&nbsp; A direct relationship does not exist between a consumer and</span></div>
<div class="ln" style="top:26.4px;left:45px;width:60px;text-align:right">4</div>
<div class="ln" style="top:26.4px;left:153px"><span class="hl">business if the:</span></div>
<div class="ln" style="top:63.2px;left:45px;width:60px;text-align:right">5</div>
<div class="ln" style="top:63.2px;left:249px"><span class="hl">(I)&nbsp; purpose of the consumer’s engagement with the business is</span></div>
<div class="ln" style="top:99.9px;left:45px;width:60px;text-align:right">6</div>
<div class="ln" style="top:99.9px;left:153px"><span class="hl">solely:</span></div>
<div class="ln" style="top:136.7px;left:45px;width:60px;text-align:right">7</div>
<div class="ln" style="top:136.7px;left:268px"><span class="hl">(aa)&nbsp; to exercise a right pursuant to section 2418 of this title;</span></div>
<div class="ln" style="top:173.5px;left:45px;width:60px;text-align:right">8</div>
<div class="ln" style="top:173.5px;left:153px"><span class="hl">or</span></div>
<div class="ln" style="top:210.3px;left:45px;width:60px;text-align:right">9</div>
<div class="ln" style="top:210.3px;left:268px"><span class="hl">(bb)&nbsp; for the business to verify the consumer’s identity;</span></div>
<div class="ln" style="top:247.0px;left:45px;width:60px;text-align:right">10</div>
<div class="ln" style="top:247.0px;left:249px"><span class="hl">(II)&nbsp; business simply collects personal information directly from</span></div>
<div class="ln" style="top:283.8px;left:45px;width:60px;text-align:right">11</div>
<div class="ln" style="top:283.8px;left:153px"><span class="hl">the consumer without the consumer intentionally interacting with the business;</span></div>
<div class="ln" style="top:320.6px;left:45px;width:60px;text-align:right">12</div>
<div class="ln" style="top:320.6px;left:153px"><span class="hl">or</span></div>
<div class="ln" style="top:357.3px;left:45px;width:60px;text-align:right">13</div>
<div class="ln" style="top:357.3px;left:249px"><span class="hl">(III)&nbsp; business sells personal data of a consumer that is collected</span></div>
<div class="ln" style="top:394.1px;left:45px;width:60px;text-align:right">14</div>
<div class="ln" style="top:394.1px;left:153px"><span class="hl">outside of a first party interaction with the consumer.</span></div>
<div class="ln" style="top:430.9px;left:45px;width:60px;text-align:right">15</div>
<div class="ln" style="top:430.9px;left:211px"><span>(C)&nbsp; The following activities conducted by a business, and the</span></div>
<div class="ln" style="top:467.6px;left:45px;width:60px;text-align:right">16</div>
<div class="ln" style="top:467.6px;left:153px"><span>collection and sale or licensing of brokered personal information incidental to</span></div>
<div class="ln" style="top:504.4px;left:45px;width:60px;text-align:right">17</div>
<div class="ln" style="top:504.4px;left:153px"><span>conducting these activities, do not qualify the business as a data broker:</span></div></div></div>
<div class="t" style="left:1085px;top:659.5px;line-height:20px;font-size:16.6px;color:#fff;font-weight:bold;text-shadow:0 0 1.5px rgba(0,0,0,0.45),0 0 3px rgba(0,0,0,0.2)">Powered by Zoom</div>
<svg class="a" style="left:816px;top:524px;" width="10" height="15" viewBox="0 0 10 15"><path d="M1 1 L1 12 L3.8 9.5 L5.8 13.8 L7.6 13 L5.6 8.8 L9 8.6z" fill="#fff" stroke="#111" stroke-width="1"/></svg>
<div class="a" style="left:0px;top:684px;width:1280px;height:18px;background:#f3f2f1;border-top:1px solid #e3e3e3"></div>
<div class="t" style="left:6px;top:683.0px;line-height:20px;font-size:8.8px;color:#5a5a5a;font-weight:normal;">Page 65 of 67</div>
<div class="t" style="left:76px;top:683.0px;line-height:20px;font-size:8.8px;color:#5a5a5a;font-weight:normal;">12722 words</div>
<svg class="a" style="left:142px;top:687px;" width="13" height="12" viewBox="0 0 13 12"><path d="M1 1.5h5v9h-5z M6 1.5h5v6" fill="none" stroke="#555" stroke-width="1"/><path d="M7 8 L9 10.5 L12 6" fill="none" stroke="#555" stroke-width="1"/></svg>
<svg class="a" style="left:171px;top:687px;" width="13" height="13" viewBox="0 0 13 13"><circle cx="6.5" cy="2.5" r="1.5" fill="none" stroke="#555"/><path d="M1 5h11 M6.5 5v3 M4 12 L6.5 8 L9 12" fill="none" stroke="#555" stroke-width="1"/><path d="M2 8 L11 12 M11 8 L2 12" stroke="#555" stroke-width="0.8"/></svg>
<div class="t" style="left:186px;top:683.0px;line-height:20px;font-size:8.6px;color:#5a5a5a;font-weight:normal;">Accessibility: Investigate</div>
<svg class="a" style="left:985px;top:687px;" width="14" height="13" viewBox="0 0 14 13"><path d="M1 4v-3h3 M10 1h3v3 M13 9v3h-3 M4 12h-3v-3" fill="none" stroke="#555" stroke-width="1"/><path d="M4 3h4l2 2v5h-6z" fill="none" stroke="#555" stroke-width="1"/></svg>
<div class="t" style="left:1000px;top:683.0px;line-height:20px;font-size:8.8px;color:#5a5a5a;font-weight:normal;">Focus</div>
<svg class="a" style="left:1042px;top:688px;" width="13" height="11" viewBox="0 0 13 11"><path d="M1 1.5h5v8h-5z M7 1.5h5v8h-5z" fill="none" stroke="#555" stroke-width="1"/><path d="M2.5 4h2 M2.5 6h2 M8.5 4h2 M8.5 6h2" stroke="#777" stroke-width="0.8"/></svg>
<div class="a" style="left:1066px;top:685px;width:31px;height:17px;background:#d2d2d2"></div>
<svg class="a" style="left:1075px;top:687px;" width="12" height="13" viewBox="0 0 12 13"><path d="M1.5 1h9v11h-9z" fill="none" stroke="#444" stroke-width="1"/><path d="M3.5 3.5h5 M3.5 5.5h5 M3.5 7.5h5 M3.5 9.5h5" stroke="#555" stroke-width="0.9"/></svg>
<svg class="a" style="left:1108px;top:687px;" width="14" height="13" viewBox="0 0 14 13"><path d="M1.5 1.5h10v10h-10z M1.5 4h10" fill="none" stroke="#555" stroke-width="1"/><circle cx="10" cy="9.5" r="3" fill="#555"/></svg>
<div class="a" style="left:1137px;top:693px;width:6px;height:1px;background:#666"></div>
<div class="a" style="left:1148px;top:693px;width:82px;height:1px;background:#8a8a8a"></div>
<div class="a" style="left:1189px;top:688px;width:4px;height:10px;background:#444"></div>
<div class="t" style="left:1087px;width:300px;text-align:center;top:682.5px;line-height:20px;font-size:11px;color:#666;font-weight:normal;">+</div>
<div class="t" style="left:1252px;top:683.0px;line-height:20px;font-size:8.6px;color:#5a5a5a;font-weight:normal;">120%</div>
</body></html>
